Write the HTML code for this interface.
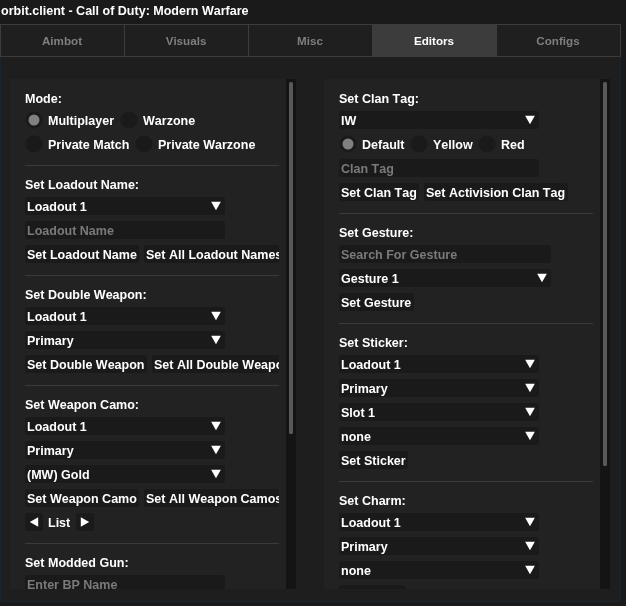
<!DOCTYPE html>
<html><head><meta charset="utf-8"><style>
html,body{margin:0;padding:0;width:626px;height:606px;overflow:hidden;background:#1a1a1a}
.r{position:absolute;display:block}
.clip{position:absolute;overflow:hidden}
.t{position:absolute;white-space:nowrap;will-change:transform;font-family:"Liberation Sans",sans-serif;font-weight:bold;color:#fff;line-height:14px;font-kerning:none}
</style></head><body>
<div class="t" style="left:0.8px;top:4px;font-size:12.531px;">orbit.client - Call of Duty: Modern Warfare</div>
<div class="r" style="left:0px;top:24px;width:621px;height:33px;background:#1f1f1f;box-sizing:border-box;border:1px solid #3c3c3c;"></div>
<div class="r" style="left:124px;top:24px;width:1px;height:33px;background:#3c3c3c;"></div>
<div class="r" style="left:248px;top:24px;width:1px;height:33px;background:#3c3c3c;"></div>
<div class="r" style="left:372px;top:24px;width:1px;height:33px;background:#3c3c3c;"></div>
<div class="r" style="left:496px;top:24px;width:1px;height:33px;background:#3c3c3c;"></div>
<div class="r" style="left:372px;top:24px;width:125px;height:33px;background:#3c3c3c;"></div>
<div class="t" style="left:0px;width:124px;text-align:center;top:34px;font-size:11.636px;color:#7f7f7f">Aimbot</div>
<div class="t" style="left:124px;width:124px;text-align:center;top:34px;font-size:11.636px;color:#7f7f7f">Visuals</div>
<div class="t" style="left:248px;width:124px;text-align:center;top:34px;font-size:11.636px;color:#7f7f7f">Misc</div>
<div class="t" style="left:372px;width:124px;text-align:center;top:34px;font-size:11.636px;">Editors</div>
<div class="t" style="left:496px;width:124px;text-align:center;top:34px;font-size:11.636px;color:#7f7f7f">Configs</div>
<div class="r" style="left:0;top:57px;width:621px;height:545px;box-sizing:border-box;background:#1e1e1e;border:1px solid #1c252b;border-top:none;border-radius:0 0 3px 3px"></div>
<div class="r" style="left:10px;top:79px;width:286px;height:510px;background:#222222;"></div>
<div class="r" style="left:286px;top:79px;width:10px;height:510px;background:#141414;"></div>
<div class="r" style="left:324px;top:79px;width:286px;height:510px;background:#222222;"></div>
<div class="r" style="left:600px;top:79px;width:10px;height:510px;background:#141414;"></div>
<div class="r" style="left:289px;top:82px;width:4px;height:352px;background:#585858;border-radius:1.5px;"></div>
<div class="r" style="left:603px;top:82px;width:4px;height:384px;background:#585858;border-radius:1.5px;"></div>
<div class="clip" style="left:10px;top:79px;width:269px;height:510px"><div class="r" style="left:-10px;top:-79px;width:626px;height:606px">
<svg class="r" style="left:0;top:0" width="626" height="606" viewBox="0 0 626 606"><circle cx="34" cy="120" r="8.5" fill="#1a1a1a"/><circle cx="34" cy="120" r="5.5" fill="#808080"/><circle cx="129" cy="120" r="8.5" fill="#1a1a1a"/><circle cx="34" cy="144" r="8.5" fill="#1a1a1a"/><circle cx="144" cy="144" r="8.5" fill="#1a1a1a"/><rect x="25" y="165" width="254" height="1" fill="#3a3a3a"/><rect x="25" y="197" width="200" height="18" rx="3" fill="#1a1a1a"/><path d="M216.00 210.20 L211.15 201.80 L220.85 201.80 Z" fill="#fff"/><rect x="25" y="221" width="200" height="18" rx="3" fill="#1a1a1a"/><rect x="25" y="245" width="114" height="18" rx="3" fill="#1a1a1a"/><rect x="144" y="245" width="141" height="18" rx="3" fill="#1a1a1a"/><rect x="25" y="275" width="254" height="1" fill="#3a3a3a"/><rect x="25" y="307" width="200" height="18" rx="3" fill="#1a1a1a"/><path d="M216.00 320.20 L211.15 311.80 L220.85 311.80 Z" fill="#fff"/><rect x="25" y="331" width="200" height="18" rx="3" fill="#1a1a1a"/><path d="M216.00 344.20 L211.15 335.80 L220.85 335.80 Z" fill="#fff"/><rect x="25" y="355" width="122" height="18" rx="3" fill="#1a1a1a"/><rect x="152" y="355" width="148" height="18" rx="3" fill="#1a1a1a"/><rect x="25" y="385" width="254" height="1" fill="#3a3a3a"/><rect x="25" y="417" width="200" height="18" rx="3" fill="#1a1a1a"/><path d="M216.00 430.20 L211.15 421.80 L220.85 421.80 Z" fill="#fff"/><rect x="25" y="441" width="200" height="18" rx="3" fill="#1a1a1a"/><path d="M216.00 454.20 L211.15 445.80 L220.85 445.80 Z" fill="#fff"/><rect x="25" y="465" width="200" height="18" rx="3" fill="#1a1a1a"/><path d="M216.00 478.20 L211.15 469.80 L220.85 469.80 Z" fill="#fff"/><rect x="25" y="489" width="114" height="18" rx="3" fill="#1a1a1a"/><rect x="144" y="489" width="141" height="18" rx="3" fill="#1a1a1a"/><rect x="25" y="513" width="18" height="18" rx="3" fill="#1a1a1a"/><path d="M29.80 522.00 L38.20 517.15 L38.20 526.85 Z" fill="#fff"/><rect x="76" y="513" width="18" height="18" rx="3" fill="#1a1a1a"/><path d="M89.20 522.00 L80.80 526.85 L80.80 517.15 Z" fill="#fff"/><rect x="25" y="543" width="254" height="1" fill="#3a3a3a"/><rect x="25" y="575" width="200" height="18" rx="3" fill="#1a1a1a"/></svg>
<div class="t" style="left:25px;top:92px;font-size:12.531px;">Mode:</div>
<div class="t" style="left:48px;top:114px;font-size:12.531px;">Multiplayer</div>
<div class="t" style="left:143px;top:114px;font-size:12.531px;">Warzone</div>
<div class="t" style="left:48px;top:138px;font-size:12.531px;">Private Match</div>
<div class="t" style="left:158px;top:138px;font-size:12.531px;">Private Warzone</div>
<div class="t" style="left:25px;top:178px;font-size:12.531px;">Set Loadout Name:</div>
<div class="t" style="left:27px;top:200px;font-size:12.531px;">Loadout 1</div>
<div class="t" style="left:27px;top:224px;font-size:12.531px;color:#7a7a7a;">Loadout Name</div>
<div class="t" style="left:27px;top:248px;font-size:12.531px;">Set Loadout Name</div>
<div class="t" style="left:146px;top:248px;font-size:12.531px;">Set All Loadout Names</div>
<div class="t" style="left:25px;top:288px;font-size:12.531px;">Set Double Weapon:</div>
<div class="t" style="left:27px;top:310px;font-size:12.531px;">Loadout 1</div>
<div class="t" style="left:27px;top:334px;font-size:12.531px;">Primary</div>
<div class="t" style="left:27px;top:358px;font-size:12.531px;">Set Double Weapon</div>
<div class="t" style="left:154px;top:358px;font-size:12.531px;">Set All Double Weapons</div>
<div class="t" style="left:25px;top:398px;font-size:12.531px;">Set Weapon Camo:</div>
<div class="t" style="left:27px;top:420px;font-size:12.531px;">Loadout 1</div>
<div class="t" style="left:27px;top:444px;font-size:12.531px;">Primary</div>
<div class="t" style="left:27px;top:468px;font-size:12.531px;">(MW) Gold</div>
<div class="t" style="left:27px;top:492px;font-size:12.531px;">Set Weapon Camo</div>
<div class="t" style="left:146px;top:492px;font-size:12.531px;">Set All Weapon Camos</div>
<div class="t" style="left:48px;top:516px;font-size:12.531px;">List</div>
<div class="t" style="left:25px;top:556px;font-size:12.531px;">Set Modded Gun:</div>
<div class="t" style="left:27px;top:578px;font-size:12.531px;color:#7a7a7a;">Enter BP Name</div>
</div></div>
<div class="clip" style="left:324px;top:79px;width:269px;height:510px"><div class="r" style="left:-324px;top:-79px;width:626px;height:606px">
<svg class="r" style="left:0;top:0" width="626" height="606" viewBox="0 0 626 606"><rect x="339" y="111" width="200" height="18" rx="3" fill="#1a1a1a"/><path d="M530.00 124.20 L525.15 115.80 L534.85 115.80 Z" fill="#fff"/><circle cx="348" cy="144" r="8.5" fill="#1a1a1a"/><circle cx="348" cy="144" r="5.5" fill="#808080"/><circle cx="419" cy="144" r="8.5" fill="#1a1a1a"/><circle cx="487" cy="144" r="8.5" fill="#1a1a1a"/><rect x="339" y="159" width="200" height="18" rx="3" fill="#1a1a1a"/><rect x="339" y="183" width="80" height="18" rx="3" fill="#1a1a1a"/><rect x="424" y="183" width="144" height="18" rx="3" fill="#1a1a1a"/><rect x="339" y="213" width="254" height="1" fill="#3a3a3a"/><rect x="339" y="245" width="212" height="18" rx="3" fill="#1a1a1a"/><rect x="339" y="269" width="212" height="18" rx="3" fill="#1a1a1a"/><path d="M542.00 282.20 L537.15 273.80 L546.85 273.80 Z" fill="#fff"/><rect x="339" y="293" width="75" height="18" rx="3" fill="#1a1a1a"/><rect x="339" y="323" width="254" height="1" fill="#3a3a3a"/><rect x="339" y="355" width="200" height="18" rx="3" fill="#1a1a1a"/><path d="M530.00 368.20 L525.15 359.80 L534.85 359.80 Z" fill="#fff"/><rect x="339" y="379" width="200" height="18" rx="3" fill="#1a1a1a"/><path d="M530.00 392.20 L525.15 383.80 L534.85 383.80 Z" fill="#fff"/><rect x="339" y="403" width="200" height="18" rx="3" fill="#1a1a1a"/><path d="M530.00 416.20 L525.15 407.80 L534.85 407.80 Z" fill="#fff"/><rect x="339" y="427" width="200" height="18" rx="3" fill="#1a1a1a"/><path d="M530.00 440.20 L525.15 431.80 L534.85 431.80 Z" fill="#fff"/><rect x="339" y="451" width="69" height="18" rx="3" fill="#1a1a1a"/><rect x="339" y="481" width="254" height="1" fill="#3a3a3a"/><rect x="339" y="513" width="200" height="18" rx="3" fill="#1a1a1a"/><path d="M530.00 526.20 L525.15 517.80 L534.85 517.80 Z" fill="#fff"/><rect x="339" y="537" width="200" height="18" rx="3" fill="#1a1a1a"/><path d="M530.00 550.20 L525.15 541.80 L534.85 541.80 Z" fill="#fff"/><rect x="339" y="561" width="200" height="18" rx="3" fill="#1a1a1a"/><path d="M530.00 574.20 L525.15 565.80 L534.85 565.80 Z" fill="#fff"/><rect x="339" y="585" width="67" height="18" rx="3" fill="#1a1a1a"/></svg>
<div class="t" style="left:339px;top:92px;font-size:12.531px;">Set Clan Tag:</div>
<div class="t" style="left:341px;top:114px;font-size:12.531px;">IW</div>
<div class="t" style="left:362px;top:138px;font-size:12.531px;">Default</div>
<div class="t" style="left:433px;top:138px;font-size:12.531px;">Yellow</div>
<div class="t" style="left:501px;top:138px;font-size:12.531px;">Red</div>
<div class="t" style="left:341px;top:162px;font-size:12.531px;color:#7a7a7a;">Clan Tag</div>
<div class="t" style="left:341px;top:186px;font-size:12.531px;">Set Clan Tag</div>
<div class="t" style="left:426px;top:186px;font-size:12.531px;">Set Activision Clan Tag</div>
<div class="t" style="left:339px;top:226px;font-size:12.531px;">Set Gesture:</div>
<div class="t" style="left:341px;top:248px;font-size:12.531px;color:#7a7a7a;">Search For Gesture</div>
<div class="t" style="left:341px;top:272px;font-size:12.531px;">Gesture 1</div>
<div class="t" style="left:341px;top:296px;font-size:12.531px;">Set Gesture</div>
<div class="t" style="left:339px;top:336px;font-size:12.531px;">Set Sticker:</div>
<div class="t" style="left:341px;top:358px;font-size:12.531px;">Loadout 1</div>
<div class="t" style="left:341px;top:382px;font-size:12.531px;">Primary</div>
<div class="t" style="left:341px;top:406px;font-size:12.531px;">Slot 1</div>
<div class="t" style="left:341px;top:430px;font-size:12.531px;">none</div>
<div class="t" style="left:341px;top:454px;font-size:12.531px;">Set Sticker</div>
<div class="t" style="left:339px;top:494px;font-size:12.531px;">Set Charm:</div>
<div class="t" style="left:341px;top:516px;font-size:12.531px;">Loadout 1</div>
<div class="t" style="left:341px;top:540px;font-size:12.531px;">Primary</div>
<div class="t" style="left:341px;top:564px;font-size:12.531px;">none</div>
<div class="t" style="left:341px;top:588px;font-size:12.531px;">Set Charm</div>
</div></div>
</body></html>
